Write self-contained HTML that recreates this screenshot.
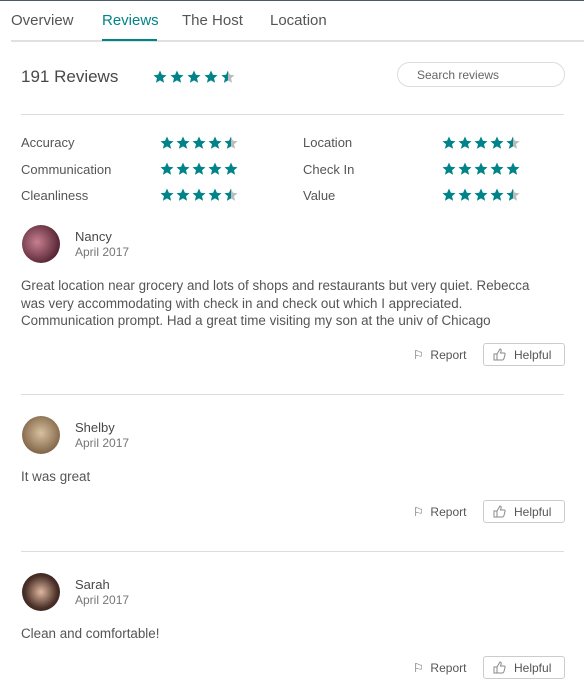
<!DOCTYPE html>
<html><head><meta charset="utf-8"><style>
*{margin:0;padding:0;box-sizing:border-box}
body{width:584px;height:684px;background:#fff;font-family:"Liberation Sans",sans-serif;color:#484848;position:relative;overflow:hidden}
.a{position:absolute;white-space:nowrap}
.tab{font-size:15px;top:12px;color:#555}
.hr{position:absolute;left:21px;right:20px;height:1px;background:#dcdcdc}
.lbl{font-size:13px;color:#555}
.stars{position:absolute;display:flex;gap:2px}
.stars svg{width:14px;height:14px}
.av{position:absolute;left:22px;width:38px;height:38px;border-radius:50%}
.name{font-size:13px;color:#484848}
.date{font-size:12px;color:#767676}
.txt{font-size:13.4px;color:#555;line-height:17.5px}
.rep{font-size:12px;color:#555}
.help{position:absolute;left:483px;width:82px;height:23px;border:1px solid #ccc;border-radius:3px;font-size:12px;color:#555;padding:4px 0 0 30px}
</style></head><body>
<svg width="0" height="0" style="position:absolute"><defs>
<path id="s" d="M7 0.5l1.9 4.3 4.6.4-3.5 3 1.1 4.6L7 10.4 2.9 12.8 4 8.2.5 5.2l4.6-.4z"/>
<clipPath id="h"><rect x="0" y="0" width="7" height="14"/></clipPath>
</defs></svg>
<div style="position:absolute;left:0;top:0;width:584px;height:1px;background:#4c5a68"></div>
<div class="a tab" style="left:11px">Overview</div>
<div class="a tab" style="left:102px;color:#008489">Reviews</div>
<div class="a tab" style="left:182px">The Host</div>
<div class="a tab" style="left:270px">Location</div>
<div style="position:absolute;left:11px;top:40px;width:573px;height:2px;background:#e0e0e0"></div>
<div style="position:absolute;left:102px;top:39px;width:55px;height:2px;background:#008489"></div>
<div class="a" style="left:21px;top:67px;font-size:17px;color:#484848">191 Reviews</div>
<div id="top"></div>
<div style="position:absolute;left:397px;top:62px;width:168px;height:25px;border:1px solid #ddd;border-radius:13px;font-size:12px;color:#666;padding:5px 0 0 19px">Search reviews</div>
<div class="hr" style="top:114px"></div>
<div class="a lbl" style="left:21px;top:135px">Accuracy</div>
<div class="a lbl" style="left:21px;top:162px">Communication</div>
<div class="a lbl" style="left:21px;top:188px">Cleanliness</div>
<div class="a lbl" style="left:303px;top:135px">Location</div>
<div class="a lbl" style="left:303px;top:162px">Check In</div>
<div class="a lbl" style="left:303px;top:188px">Value</div>

<div class="av" style="top:225px;background:radial-gradient(circle at 40% 45%,#c88090,#5a2838 70%,#2a1018)"></div>
<div class="a name" style="left:75px;top:229px">Nancy</div>
<div class="a date" style="left:75px;top:245px">April 2017</div>
<div class="a txt" style="left:21px;top:277px">Great location near grocery and lots of shops and restaurants but very quiet. Rebecca<br>was very accommodating with check in and check out which I appreciated.<br>Communication prompt. Had a great time visiting my son at the univ of Chicago</div>
<div class="a rep" style="left:413px;top:348px">⚐&nbsp; Report</div>
<div class="help" style="top:343px">Helpful</div>
<div class="hr" style="top:394px"></div>

<div class="av" style="top:416px;background:radial-gradient(circle at 50% 45%,#d8c0a0,#8a7050 65%,#504030)"></div>
<div class="a name" style="left:75px;top:420px">Shelby</div>
<div class="a date" style="left:75px;top:436px">April 2017</div>
<div class="a txt" style="left:21px;top:468px">It was great</div>
<div class="a rep" style="left:413px;top:505px">⚐&nbsp; Report</div>
<div class="help" style="top:500px">Helpful</div>
<div class="hr" style="top:551px"></div>

<div class="av" style="top:573px;background:radial-gradient(circle at 50% 50%,#e0b8a0,#4a3028 60%,#201410)"></div>
<div class="a name" style="left:75px;top:577px">Sarah</div>
<div class="a date" style="left:75px;top:593px">April 2017</div>
<div class="a txt" style="left:21px;top:625px">Clean and comfortable!</div>
<div class="a rep" style="left:413px;top:661px">⚐&nbsp; Report</div>
<div class="help" style="top:656px">Helpful</div>

<script>
function stars(x,y,half,g){let h='<div class="stars" style="left:'+x+'px;top:'+y+'px;gap:'+g+'px">';
for(let i=0;i<5;i++){if(i==4&&half)h+='<svg viewBox="0 0 14 14"><use href="#s" fill="#bbb"/><use href="#s" fill="#008489" clip-path="url(#h)"/></svg>';else h+='<svg viewBox="0 0 14 14"><use href="#s" fill="#008489"/></svg>';}
return h+'</div>';}
let o='';o+=stars(153,70,1,3);
[[136,1],[162,0],[188,1]].forEach(r=>{o+=stars(160,r[0],r[1],2);o+=stars(442,r[0],r[1],2);});
document.getElementById('top').outerHTML=o;
document.querySelectorAll('.help').forEach(e=>{let d=document.createElement('div');d.className='a';d.style.cssText='left:493px;top:'+(parseInt(e.style.top)+5)+'px';d.innerHTML='<svg width="13" height="13" viewBox="0 0 13 13" fill="none" stroke="#888"><path d="M1 6h3v6H1zM4 6l3-5c1 0 1.5 1 1 2.5L7.5 5H11c1 0 1.3.8 1 1.5l-1.2 4.5c-.2.6-.6 1-1.2 1H4"/></svg>';document.body.appendChild(d);});
</script>
</body></html>
